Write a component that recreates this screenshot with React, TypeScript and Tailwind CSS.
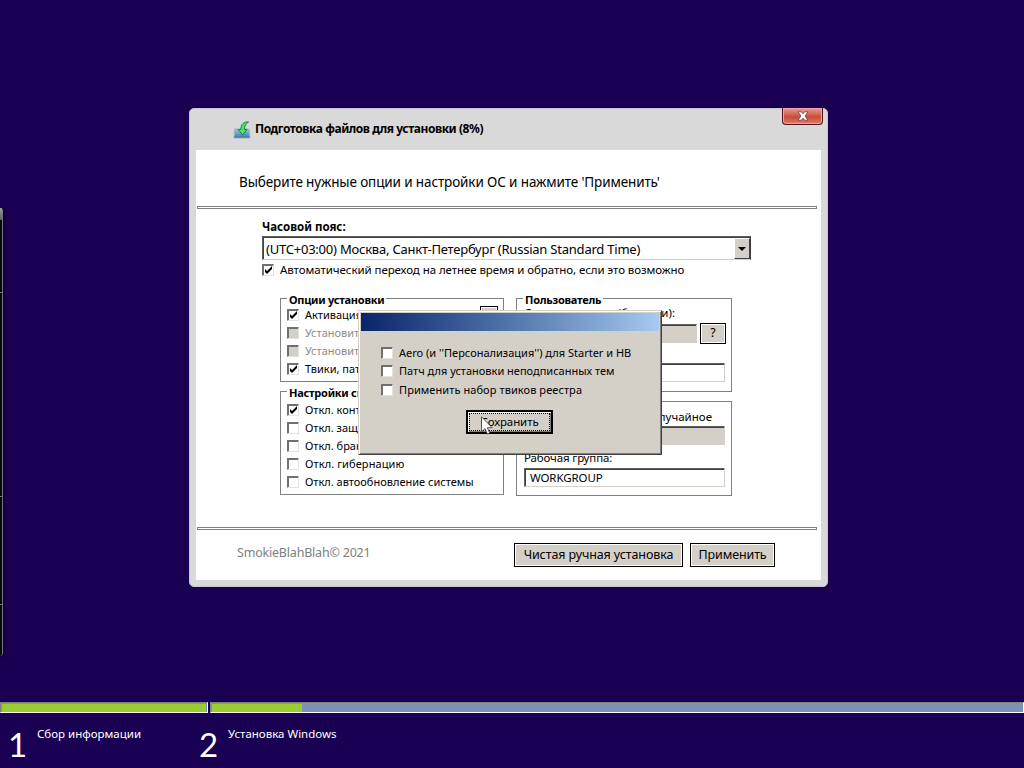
import type { ReactNode } from "react";

const cx = (...names: (string | undefined | false)[]) => names.filter(Boolean).join(" ");

interface CheckBoxProps {
  label: string;
  checked?: boolean;
  disabled?: boolean;
  className?: string;
}

const CheckBox = ({ label, checked, disabled, className }: CheckBoxProps) => {
  return (
    <div className={cx("flex h-[18px] items-center gap-[6px] whitespace-nowrap", className)}>
      <span
        className={cx(
          "block size-3 shrink-0 border border-t-[#707070] border-l-[#707070] border-r-[#e4e2dc] border-b-[#e4e2dc] shadow-[inset_1px_1px_0_#707070]",
          disabled ? "bg-[#d4d0c8]" : "bg-white"
        )}
      >
        {checked && (
          <svg viewBox="0 0 10 10" className="block size-[10px]">
            <path d="M2 4v3l2 2 5-5V1L4 6z" fill="#000" />
          </svg>
        )}
      </span>
      <span className={disabled ? "text-[#8c8c8c]" : "text-black"}>{label}</span>
    </div>
  );
};

const GroupBox = ({ title, className, children }: { title?: string; className?: string; children: ReactNode }) => {
  return (
    <div className={cx("flex flex-col border border-[#808080]", className)}>
      {title && (
        <span className="-mt-[8px] ml-[6px] h-4 self-start bg-white px-[2px] leading-[17px] font-bold tracking-[-0.25px]">
          {title}
        </span>
      )}
      {children}
    </div>
  );
};

const Field = ({ value, disabled, className }: { value?: string; disabled?: boolean; className?: string }) => {
  return (
    <div
      className={cx(
        "h-[19px] border border-t-[#606060] border-l-[#606060] border-r-[#d4d0c8] border-b-[#d4d0c8] pl-[5px] leading-[18px] shadow-[inset_1px_1px_0_#404040]",
        disabled ? "bg-[#d4d0c8]" : "bg-white",
        className
      )}
    >
      {value}
    </div>
  );
};

const Button = ({ className, children }: { className?: string; children: ReactNode }) => {
  return (
    <button
      className={cx(
        "flex items-center justify-center border border-black bg-[#d4d0c8] whitespace-nowrap shadow-[inset_0_0_0_1px_#fff]",
        className
      )}
    >
      {children}
    </button>
  );
};

const Divider = () => <div className="ml-px h-[3px] w-[620px] shrink-0 border border-[#808080]" />;

const InstallIcon = () => (
  <svg viewBox="0 0 18 18" className="size-[18px]">
    <defs>
      <linearGradient id="box" x1="0" y1="0" x2="0" y2="1">
        <stop offset="0" stopColor="#9cc4e4" />
        <stop offset="1" stopColor="#3f78b8" />
      </linearGradient>
    </defs>
    <path d="M1.500 8h14.500l1 9H1z" fill="url(#box)" stroke="#9fb2c8" strokeWidth="1" />
    <path d="M1.500 15h15v1.500h-15z" fill="#527da8" />
    <path d="M15.500 1C11 .5 8 3 7.800 8.500H5l4.800 5.500L14 8.500h-2.500C11.400 5 12.500 3 15.500 1z" fill="#4fe070" stroke="#158a37" strokeWidth="1" />
  </svg>
);

const CloseButton = () => (
  <button className="flex h-[17px] w-[41px] items-center justify-center rounded-b-[4px] border border-t-0 border-[#4a1520] bg-linear-to-b from-[#e5a296] via-[#cb4a3a] via-55% to-[#de7a66] shadow-[inset_0_0_0_1px_#eaa79d]">
    <svg viewBox="0 0 12 10" className="h-[10px] w-3">
      <path
        d="M1 .8h3.300L6 2.800 7.700.8H11L8 5l3 4.200H7.700L6 7.200 4.300 9.200H1L4 5z"
        fill="#fff"
        stroke="#6b4048"
        strokeWidth=".8"
      />
    </svg>
  </button>
);

const Cursor = () => (
  <svg viewBox="0 0 12 19" className="absolute top-[416px] left-[481px] h-[19px] w-3">
    <path d="M.5.8v15l3.500-3.300 2.400 5.600 2.300-1-2.400-5.400h4.800z" fill="#fff" stroke="#333" strokeWidth=".8" />
  </svg>
);

const SetupWindow = () => {
  return (
    <div className="absolute top-[108px] left-[189px] flex h-[479px] w-[639px] flex-col rounded-[5px] border border-[#c8c8d0] bg-[#d9d9d9] px-[6px] pb-[6px]">
      <div className="-mt-px flex h-[42px] shrink-0 items-start pl-[37px]">
        <div className="mt-[13px]">
          <InstallIcon />
        </div>
        <span className="mt-[12px] ml-[4px] text-[12px] leading-[18px] font-bold tracking-[-0.44px]">
          Подготовка файлов для установки (8%)
        </span>
        <div className="mr-[-2px] ml-auto">
          <CloseButton />
        </div>
      </div>

      <div className="flex grow flex-col bg-white">
        <div className="h-[56px] shrink-0 pt-[22px] pl-[43px] text-[13.5px] leading-[20px] tracking-[-0.12px] whitespace-nowrap">
          Выберите нужные опции и настройки ОС и нажмите 'Применить'
        </div>
        <Divider />

        <div className="flex h-[318px] shrink-0 flex-col pl-[66px]">
          <span className="mt-[9px] h-[18px] text-[11.5px] leading-[18px] font-bold">Часовой пояс:</span>
          <div className="flex h-6 w-[489px] border border-t-[#606060] border-l-[#606060] border-r-[#404040] border-b-[#d4d0c8] shadow-[inset_1px_1px_0_#404040]">
            <span className="grow pl-[3px] text-[13px] leading-[25px] tracking-[-0.22px] whitespace-nowrap">
              (UTC+03:00) Москва, Санкт-Петербург (Russian Standard Time)
            </span>
            <span className="mt-px flex h-[21px] w-4 items-center justify-center border border-t-white border-l-white border-r-[#404040] border-b-[#404040] bg-[#d4d0c8]">
              <svg viewBox="0 0 8 4" className="h-1 w-2">
                <path d="M0 0h8L4 4z" />
              </svg>
            </span>
          </div>
          <CheckBox
            checked
            label="Автоматический переход на летнее время и обратно, если это возможно"
            className="mt-px text-[11.5px] tracking-[-0.07px]"
          />

          <div className="mt-[19px] ml-[18px] flex gap-3">
            <div className="flex w-56 flex-col gap-[9px]">
              <GroupBox title="Опции установки" className="h-[84px]">
                <div className="-mt-px flex pl-[6px]">
                  <div>
                    <CheckBox checked label="Активация" />
                    <CheckBox disabled label="Установить" />
                    <CheckBox disabled label="Установить" />
                    <CheckBox checked label="Твики, патчи" />
                  </div>
                  <Button className="mr-[5px] ml-auto h-[18px] w-[18px]">…</Button>
                </div>
              </GroupBox>
              <GroupBox title="Настройки системы" className="h-[104px]">
                <div className="mt-px pl-[6px]">
                  <CheckBox checked label="Откл. контроль" />
                  <CheckBox label="Откл. защитник" />
                  <CheckBox label="Откл. брандмауэр" />
                  <CheckBox label="Откл. гибернацию" className="tracking-[0.1px]" />
                  <CheckBox label="Откл. автообновление системы" />
                </div>
              </GroupBox>
            </div>

            <div className="flex w-[216px] flex-col gap-[9px]">
              <GroupBox title="Пользователь" className="h-[94px]">
                <div className="-mt-[2px] flex flex-col pl-[7px]">
                  <span className="flex w-[151px] justify-between text-[11.5px] leading-[16px] whitespace-nowrap">
                    <span>Создать</span>
                    <span>(буквами):</span>
                  </span>
                  <div className="mt-[2px] flex items-center gap-[3px]">
                    <Field disabled className="w-[173px]" />
                    <Button className="h-[21px] w-[26px] text-[12.5px]">?</Button>
                  </div>
                  <Field className="mt-[19px] w-[201px]" />
                </div>
              </GroupBox>
              <GroupBox className="h-[95px] pl-[7px] text-[11.5px]">
                <span className="mt-[6px] w-[188px] text-right leading-[18px]">Имя ПК: случайное</span>
                <Field disabled className="w-[201px]" />
                <span className="mt-[4px] h-[19px] leading-[18px] tracking-[-0.15px]">Рабочая группа:</span>
                <Field value="WORKGROUP" className="w-[201px] tracking-[-0.1px]" />
              </GroupBox>
            </div>
          </div>
        </div>

        <Divider />
        <div className="flex items-start pt-[13px] pl-[41px]">
          <span className="text-[12.5px] leading-[20px] tracking-[-0.2px] text-[#808080]">SmokieBlahBlah© 2021</span>
          <div className="mr-[46px] ml-auto flex gap-[7px] text-[12.5px] tracking-[-0.1px]">
            <Button className="h-6 w-[169px] pt-px">Чистая ручная установка</Button>
            <Button className="h-6 w-[85px] pt-px">Применить</Button>
          </div>
        </div>
      </div>
    </div>
  );
};

const TweaksDialog = () => {
  return (
    <div className="absolute top-[310px] left-[358px] flex h-[145px] w-[304px] flex-col border border-t-[#d4d0c8] border-l-[#d4d0c8] border-r-[#404040] border-b-[#404040] bg-[#d4d0c8] p-[2px] shadow-[inset_1px_1px_0_#fff,inset_-1px_-1px_0_#808080]">
      <div className="h-[18px] shrink-0 bg-linear-to-r from-[#0a246a] to-[#a6caf0]" />
      <div className="mt-[13px] flex flex-col pl-[20px]">
        <CheckBox label={"Aero (и ''Персонализация'') для Starter и HB"} />
        <CheckBox label="Патч для установки неподписанных тем" />
        <CheckBox label="Применить набор твиков реестра" className="mt-px tracking-[0.08px]" />
      </div>
      <button className="mt-[11px] ml-[105px] h-[24px] w-[87px] border-2 border-black p-px text-[11.5px] shadow-[inset_1px_1px_0_#fff,inset_-1px_-1px_0_#808080]">
        <span className="block h-full border border-dotted border-black leading-[15px] tracking-[-0.1px]">Сохранить</span>
      </button>
    </div>
  );
};

const Stage = ({ step, label, className }: { step: number; label: string; className?: string }) => {
  return (
    <div className={cx("flex items-start text-white", className)}>
      <span className="w-[29px] font-['Lato','Noto_Sans',sans-serif] text-[33px] leading-[39px]">{step}</span>
      <span className="text-[11.5px] leading-[18px]">{label}</span>
    </div>
  );
};

export default function App() {
  return (
    <div className="relative flex h-[768px] w-[1024px] flex-col overflow-hidden bg-[#1a0052] font-['Noto_Sans','Open_Sans',sans-serif] text-[11px] text-black">
      <div className="mt-[208px] flex h-[448px] w-[3px] shrink-0 flex-col rounded-r-[3px] border-r border-[#77747f] bg-[#08080c] shadow-[1px_1px_3px_#08001e]">
        <div className="h-[12px] bg-linear-to-b from-[#a0a0a0] to-[#606060]" />
        <div className="mt-[72px] h-px bg-[#77747f]" />
        <div className="mt-[203px] h-px bg-[#77747f]" />
        <div className="mt-[107px] h-px bg-[#77747f]" />
      </div>

      <div className="mt-[46px] flex h-[11px] shrink-0 gap-[2px]">
        <div className="w-[208px] border border-t-[#808080] border-l-[#808080] border-r-white border-b-white bg-[#7b93b3] p-px pb-0">
          <div className="h-full bg-[#9acd32]" />
        </div>
        <div className="grow border border-t-[#808080] border-l-[#808080] border-r-white border-b-white bg-[#7b93b3] p-px pb-0">
          <div className="h-full w-[90px] bg-[#9acd32]" />
        </div>
      </div>
      <div className="mt-[12px] flex">
        <Stage step={1} label="Сбор информации" className="w-[191px] pl-[8px]" />
        <Stage step={2} label="Установка Windows" className="pl-[8px]" />
      </div>

      <SetupWindow />
      <TweaksDialog />
      <Cursor />
    </div>
  );
}
